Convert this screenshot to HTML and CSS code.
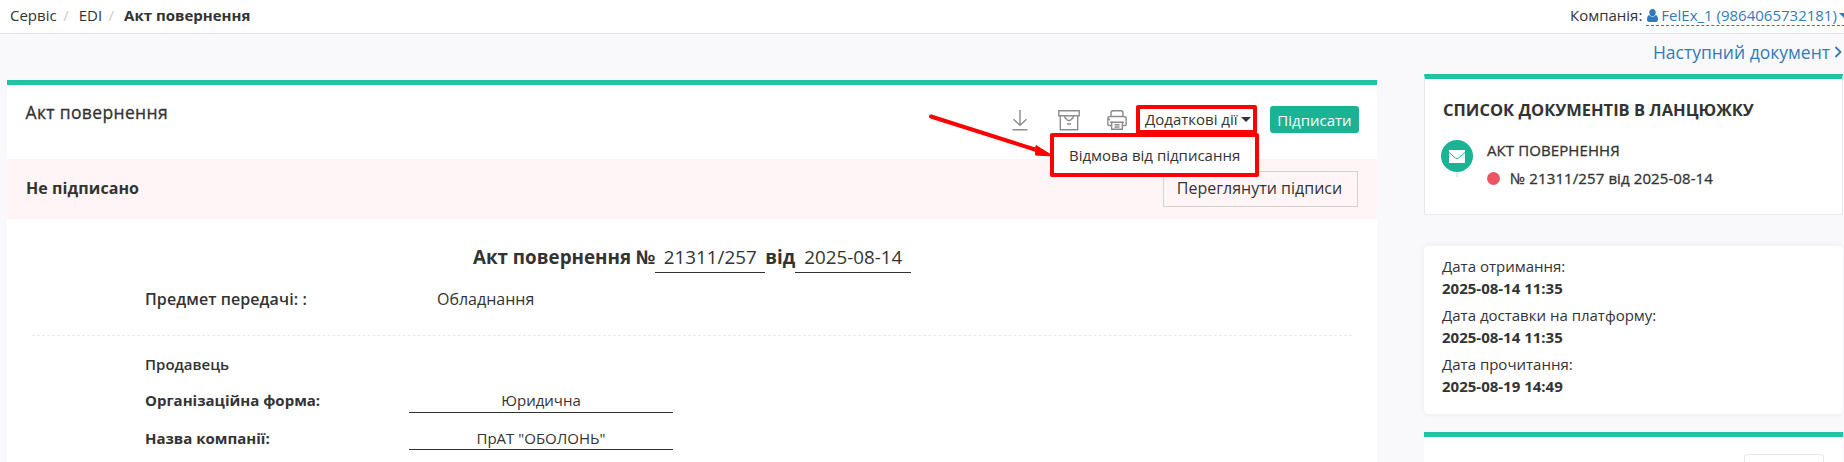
FILE: index.html
```html
<!DOCTYPE html>
<html lang="uk">
<head>
<meta charset="utf-8">
<title>Акт повернення</title>
<link rel="stylesheet" href="styles.css">
</head>
<body>
<header class="topbar">
  <nav class="crumbs"><span>Сервіс</span><i class="sep">/</i><span class="edi">EDI</span><i class="sep">/</i><b>Акт повернення</b></nav>
  <div class="company"><span>Компанія:</span>
    <a class="company-link"><svg class="user" viewBox="0 0 11 13"><ellipse cx="5.5" cy="3.6" rx="3.2" ry="3.6"/><path d="M2.200 6C.7 6.500 0 8.200 0 10.500 0 12 .8 13 2 13h7c1.200 0 2-1 2-2.500 0-2.300-.7-4-2.200-4.500C7.200 8.200 3.800 8.200 2.200 6z"/></svg><span>FelEx_1 (9864065732181)</span><i class="caret"></i></a>
  </div>
</header>
<div class="page">
  <main class="doc">
    <div class="doc-head">
      <h1>Акт повернення</h1>
      <div class="actions">
        <svg class="ico-down" viewBox="0 0 16 21"><path d="M8 0v14.500M1.500 9.300 8 15.300l6.500-6M.5 19.800h15"/></svg>
        <svg class="ico-box" viewBox="0 0 22 21"><path d="M.8.8h20.400v5H.8zM2.300 5.800v13.900h17.400V5.800M6.800 5.800v1.400c0 1.200 1.200 1 1.700 2.100.6 1.500 4.400 1.500 5 0 .5-1.100 1.700-.9 1.700-2.100V5.800M9 14h4"/></svg>
        <svg class="ico-print" viewBox="0 0 20 21"><path d="M4 6.500V3.200C4 1.500 4.800.8 6 .8h8c1.200 0 2 .7 2 2.400v3.300M4.500 15.500H2.200c-1 0-1.400-.5-1.400-1.500V9c0-1.700.9-2.500 2.500-2.500h13.400c1.600 0 2.500.8 2.500 2.500v5c0 1-.4 1.500-1.400 1.500h-2.300M1 9.500h2M4.700 12.300h10.600v7H4.700zM3 12.300h14M7.500 14.800h5M7.500 17h5"/></svg>
        <div class="more">Додаткові дії<i class="caret"></i>
          <div class="menu">Відмова від підписання</div>
          <svg class="arrow" viewBox="0 0 126 46"><path class="shaft" d="M3 3.500 110 37.500"/><path class="tip" d="M108 32.500 125 43 107.500 42z"/></svg>
        </div>
        <button class="sign">Підписати</button>
      </div>
    </div>
    <div class="status"><b>Не підписано</b><button class="view">Переглянути підписи</button></div>
    <div class="doc-title"><b>Акт повернення №</b><span class="num">21311/257</span><b>від</b><span class="date">2025-08-14</span></div>
    <div class="subject"><span class="label">Предмет передачі: :</span><span>Обладнання</span></div>
    <hr class="rule">
    <section class="party">
      <div class="party-name">Продавець</div>
      <div class="field"><b>Організаційна форма:</b><span>Юридична</span></div>
      <div class="field"><b>Назва компанії:</b><span>ПрАТ "ОБОЛОНЬ"</span></div>
    </section>
  </main>
  <aside class="side">
    <a class="next"><span>Наступний документ</span><svg viewBox="0 0 8 12"><path d="M1.500 1 6.500 6l-5 5"/></svg></a>
    <section class="chain">
      <h2>СПИСОК ДОКУМЕНТІВ В ЛАНЦЮЖКУ</h2>
      <div class="chain-item">
        <div class="mark"><div class="badge"><svg viewBox="0 0 16 13"><path fill="#fff" d="M0 0h16v13H0z"/><path fill="none" stroke="#1ab394" d="M0 2.500 6.500 8q1.500 1.200 3 0L16 2.500"/></svg></div><i></i></div>
        <div class="chain-text"><div>АКТ ПОВЕРНЕННЯ</div><div class="ref"><i class="dot"></i>№ 21311/257 від 2025-08-14</div></div>
      </div>
    </section>
    <section class="dates">
      <div>Дата отримання:<b>2025-08-14 11:35</b></div>
      <div>Дата доставки на платформу:<b>2025-08-14 11:35</b></div>
      <div>Дата прочитання:<b>2025-08-19 14:49</b></div>
    </section>
    <section class="extra"><div class="stub"></div></section>
  </aside>
</div>
</body>
</html>
```
FILE: styles.css
```css
* { box-sizing: border-box; }
body { margin: 0; width: 1844px; height: 462px; overflow: hidden; background: #f9f9fb; color: #333; font: 15px/22px "Open Sans", sans-serif; }
svg { display: block; flex: none; }
i { font-style: normal; }
h1, h2 { margin: 0; }
button { font: inherit; }

.topbar { height: 34px; background: #fff; border-bottom: 1px solid #e4e5e9; display: flex; justify-content: space-between; padding: 4px 0 0 10px; }
.crumbs { display: flex; }
.sep { color: #ccc; margin: 0 10px 0 6.500px; }
.company { display: flex; gap: 4px; white-space: nowrap; width: 274px; }
.company-link { display: flex; color: #337ab7; height: 22px; border-bottom: 1px dashed #337ab7; flex: none; width: 204px; }
.user { width: 11px; height: 13px; margin: 5px 3px 0 1px; fill: #337ab7; }
.caret { flex: none; width: 0; height: 0; border: 5px solid transparent; border-top-color: currentColor; border-bottom: 0; }
.company .caret { margin: 9px 0 0 2px; }

.page { display: flex; gap: 47px; padding-left: 7px; }
.doc { width: 1370px; height: 382px; margin-top: 46px; background: #fff; border-top: 5px solid #1dc5a3; }
.doc-head { height: 74px; display: flex; justify-content: space-between; padding: 16px 18px 0 18.500px; }
h1 { font-size: 17.500px; font-weight: 400; line-height: 23px; letter-spacing: .35px; -webkit-text-stroke: .3px #333; }
.actions { display: flex; height: 28px; margin-top: 4px; }
.actions svg { fill: none; stroke: #8c8c8c; stroke-width: 1.4; margin-top: 5px; }
.ico-down { width: 16px; height: 21px; margin-right: 30px; }
.ico-box { width: 22px; height: 21px; margin-right: 27px; }
.ico-print { width: 20px; height: 21px; margin-right: 9px; }
.more { position: relative; width: 121px; height: 29px; margin-right: 13px; border: 4px solid #f00; border-radius: 2px; padding: 0 0 0 5px; display: flex; white-space: nowrap; line-height: 20px; }
.more > .caret { margin: 8px 0 0 3px; }
.menu { position: absolute; left: -90px; top: 24px; z-index: 2; width: 209px; height: 44px; padding: 8px 0 0 15px; background: #fff; border: 4px solid #f00; border-radius: 2px; }
.actions .arrow { position: absolute; left: -212px; top: 4px; width: 126px; height: 46px; margin: 0; z-index: 3; }
.actions .arrow .shaft { stroke: #f00; stroke-width: 4; stroke-linecap: round; }
.actions .arrow .tip { fill: #f00; stroke: #f00; stroke-width: 1; }
.sign { width: 89px; height: 27px; margin-top: 1px; border: 0; border-radius: 3px; background: #1ab394; color: #fff; padding: 0; line-height: 26px; }
.status { height: 60px; padding: 12px 19px 0 19px; background: #fff5f6; display: flex; justify-content: space-between; font-size: 16px; line-height: 35px; }
.view { width: 195px; height: 36px; padding: 0 2px 1px 0; background: transparent; border: 1px solid #d2d2d2; color: #333; line-height: 33px; }
.status b { letter-spacing: .08px; }
.doc-title { display: flex; margin: 26px 0 0 466px; font-size: 18.800px; line-height: 25px; height: 28px; }
.doc-title span { border-bottom: 1px solid #333; text-align: center; }
.num { width: 110px; }
.date { width: 116px; }
.subject { display: flex; margin: 14px 0 0 138px; font-size: 16px; line-height: 24px; }
.label { width: 292px; font-weight: 600; letter-spacing: .08px; }
.rule { margin: 24px 25px 0; border: 0; border-top: 1px dashed #e7eaec; }
.party { padding: 17px 0 0 138px; }
.party-name { font-weight: 600; height: 33px; }
.field { display: flex; height: 37px; padding-top: 3px; }
.field + .field { padding-top: 4px; }
.field b { width: 264px; }
.field span { width: 264px; height: 24px; text-align: center; border-bottom: 1px solid #333; }
.field + .field span { height: 23px; }

.side { width: 419px; }
.next { display: flex; justify-content: flex-end; height: 40px; padding: 6px 1px 0 0; color: #337ab7; font-size: 17.500px; line-height: 25px; }
.next svg { width: 8px; height: 12px; margin: 6px 0 0 4px; fill: none; stroke: #337ab7; stroke-width: 1.800; }
.chain { height: 141px; background: #fff; border: 1px solid #e7eaec; border-top: 5px solid #1dc5a3; padding: 20px 16px 0; }
h2 { font-size: 16.500px; font-weight: 700; line-height: 22px; padding-left: 2px; }
.chain-item { display: flex; gap: 14px; padding-top: 18px; }
.mark { width: 32px; margin-top: 1px; }
.mark > i { display: block; width: 2px; height: 5px; margin-left: 15px; background: #e7eaec; }
.badge { width: 32px; height: 32px; border-radius: 50%; background: #1ab394; display: grid; place-items: center; }
.badge svg { width: 16px; height: 13px; }
.chain-text { letter-spacing: .1px; -webkit-text-stroke: .3px #333; }
.ref { display: flex; align-items: center; gap: 10px; margin-top: 6px; }
.dot { width: 13px; height: 13px; border-radius: 50%; background: #ed5565; }
.dates { margin-top: 31px; height: 168px; background: #fff; border-radius: 4px; box-shadow: 0 0 6px rgba(0,0,0,.07); padding: 9px 18px; }
.dates div { height: 49px; }
.dates b { display: block; }
.extra { margin-top: 18px; height: 40px; background: #fff; border-top: 5px solid #1dc5a3; padding: 17px 19px 0; display: flex; justify-content: flex-end; }
.stub { width: 80px; border: 1px solid #e4e7ea; border-radius: 3px; }
```
